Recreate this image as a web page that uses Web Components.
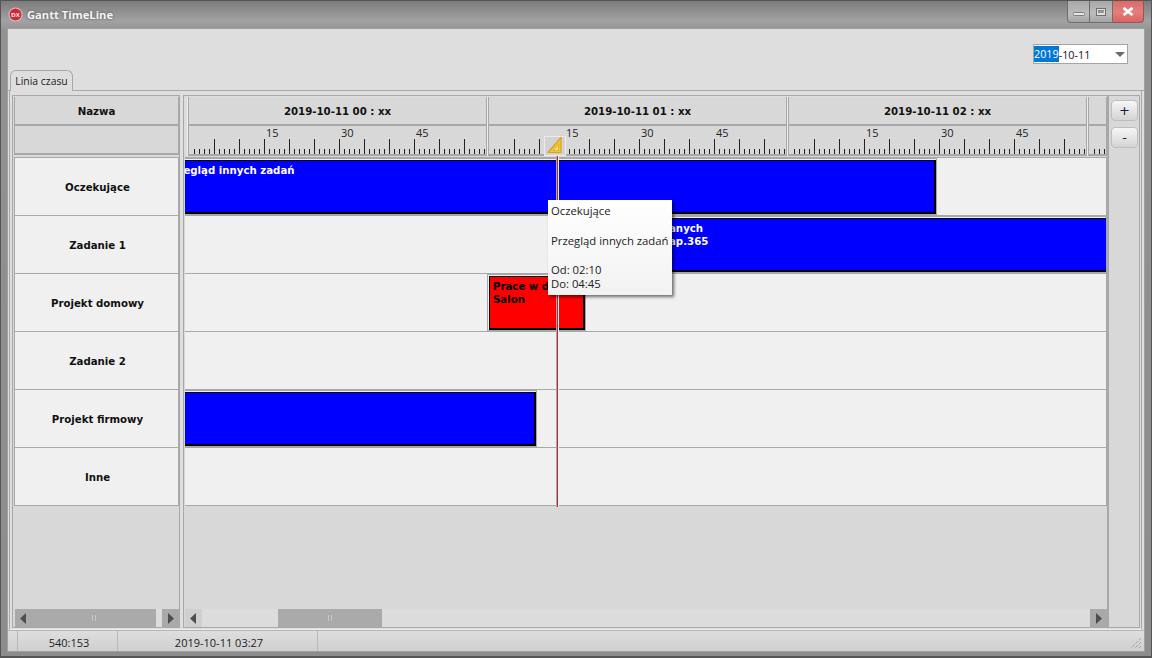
<!DOCTYPE html>
<html>
<head>
<meta charset="utf-8">
<title>Gantt TimeLine</title>
<style>
  html, body { margin: 0; padding: 0; width: 1152px; height: 658px; overflow: hidden; background: #6a6a6a; }
  body { font-family: "Noto Sans", "DejaVu Sans", sans-serif; }
</style>
</head>
<body>
<gantt-window></gantt-window>

<script>
const BOLD = 'bold 10.2px "DejaVu Sans", sans-serif';

class TitleBar extends HTMLElement {
  constructor() {
    super();
    this.shadow = this.attachShadow({ mode: "open" });
  }
  connectedCallback() {
    this.shadow.innerHTML = `
      <style>
        :host { display: flex; align-items: center; height: 27px; box-sizing: border-box; padding-left: 7px; flex: none; }
        .logo { width: 15px; height: 15px; margin-right: 4px; }
        .cap { font: bold 11.2px "Open Sans", "DejaVu Sans", sans-serif; color: #f4f4f4; text-shadow: 0 0 3px #555; }
        .btns { margin-left: auto; margin-right: 7px; align-self: flex-start; display: flex; height: 22px; }
        .b { width: 23px; display: flex; align-items: center; justify-content: center; box-sizing: border-box;
          border: 1px solid #6e6e6e; border-top: 0; border-left-width: 0;
          background: linear-gradient(#a8a8a8, #bcbcbc 60%, #a4a4a4); }
        .b:first-child { border-left-width: 1px; border-radius: 0 0 0 4px; }
        .x { width: 31px; background: linear-gradient(#d96a6a, #e57e7e 50%, #dc6464); border-radius: 0 0 4px 0; border-color: #8e5a5a; }
      </style>
      <svg class="logo" viewBox="0 0 15 15"><circle cx="7.5" cy="7.5" r="7" fill="#c9c9c9"/><circle cx="7.5" cy="7.5" r="6" fill="#dc2235"/><text x="7.5" y="9.6" font-size="6" font-weight="700" fill="#fff" text-anchor="middle" font-family="Liberation Sans">DX</text></svg>
      <span class="cap">${this.getAttribute("text")}</span>
      <div class="btns">
        <div class="b"><svg width="12" height="4" style="margin-top:4px"><rect x=".5" y=".5" width="11" height="3" rx="1" fill="#e6e6e6" stroke="#7c7c7c"/></svg></div>
        <div class="b"><svg width="10" height="8"><rect x=".5" y=".5" width="9" height="7" fill="#dedede" stroke="#6e6e6e"/><rect x="2.5" y="2.5" width="5" height="2" fill="#9a9a9a" stroke="#6e6e6e" stroke-width=".6"/></svg></div>
        <div class="b x"><svg width="12" height="9"><path d="M1.5 1 L10.5 8 M10.5 1 L1.5 8" stroke="#fff" stroke-width="2.8"/></svg></div>
      </div>`;
  }
}

class DatePicker extends HTMLElement {
  constructor() {
    super();
    this.shadow = this.attachShadow({ mode: "open" });
  }
  connectedCallback() {
    const v = this.getAttribute("value");
    this.shadow.innerHTML = `
      <style>
        :host { display: flex; align-items: center; width: 95px; height: 20px; box-sizing: border-box; background: #fff;
          border: 1px solid #a4a4a4; font: 10.8px "Open Sans", "DejaVu Sans", sans-serif; color: #111; }
        .sel { background: #0078d7; color: #fff; line-height: 16px; }
        .arrow { margin-left: auto; margin-right: 2px; width: 0; height: 0; border: 5px solid transparent; border-top: 5px solid #6a6a6a; border-bottom: 0; }
      </style>
      <span class="sel">${v.slice(0, 4)}</span><span>${v.slice(4)}</span><span class="arrow"></span>`;
  }
}

class TimeRuler extends HTMLElement {
  constructor() {
    super();
    this.shadow = this.attachShadow({ mode: "open" });
  }
  connectedCallback() {
    const w = +this.getAttribute("width");
    const labels = this.hasAttribute("nolabels") ? [] : [15, 30, 45];
    let ticks = "";
    for (let x = 7; x < w - 1; x += 5) {
      const major = (x - 2) % 25 === 0;
      ticks += `<rect x="${x}" y="${major ? 13 : 23}" width="1" height="${major ? 15 : 5}" fill="#222"/>`;
    }
    const texts = labels.map(m => `<text x="${2 + m * 5 + 2}" y="11" font-size="11" fill="#222" font-family="Open Sans">${m}</text>`).join("");
    this.shadow.innerHTML = `
      <style>
        :host { display: block; width: ${w}px; height: 30px; }
        svg { display: block; background: #d8d8d8; }
      </style>
      <svg width="${w}" height="30"><rect width="1" height="30" fill="#ececec"/><rect x="1" width="1" height="30" fill="#a8a8a8"/><rect x="${w - 1}" width="1" height="30" fill="#a8a8a8"/><rect x="1" y="28" width="${w - 1}" height="2" fill="#a8a8a8"/>${ticks}${texts}</svg>`;
  }
}

class HourHead extends HTMLElement {
  constructor() {
    super();
    this.shadow = this.attachShadow({ mode: "open" });
  }
  connectedCallback() {
    const w = this.getAttribute("width");
    this.shadow.innerHTML = `
      <style>
        :host { display: flex; flex-direction: column; width: ${w}px; flex: none; }
        .t { height: 29px; box-sizing: border-box; background: #d8d8d8; border: solid #a8a8a8; border-width: 0 1px 2px 1px; padding-top: 2px;
          margin-left: 1px; box-shadow: -1px 0 0 #ececec;
          display: flex; align-items: center; justify-content: center; font: ${BOLD}; color: #111; }
      </style>
      <div class="t">${this.getAttribute("text") || ""}</div>
      <time-ruler width="${w}" ${this.hasAttribute("nolabels") ? "nolabels" : ""}></time-ruler>`;
  }
}

class NameCell extends HTMLElement {
  constructor() {
    super();
    this.shadow = this.attachShadow({ mode: "open" });
  }
  connectedCallback() {
    this.shadow.innerHTML = `
      <style>
        :host { display: flex; align-items: center; justify-content: center; box-sizing: border-box; height: 58px;
          background: #f0f0f0; border: 1px solid #a8a8a8; border-width: 0 1px 1px 1px; padding: 1px 0 0 2px;
          font: ${BOLD}; color: #111; }
      </style>
      <slot></slot>`;
  }
}

class TimelineRow extends HTMLElement {
  constructor() {
    super();
    this.shadow = this.attachShadow({ mode: "open" });
  }
  connectedCallback() {
    this.shadow.innerHTML = `
      <style>
        :host { display: block; position: relative; height: 58px; box-sizing: border-box; background: #f0f0f0; border-bottom: 1px solid #a8a8a8; }
      </style>
      <slot></slot>`;
  }
}

class TaskBar extends HTMLElement {
  constructor() {
    super();
    this.shadow = this.attachShadow({ mode: "open" });
  }
  connectedCallback() {
    const l = this.getAttribute("left"), w = this.getAttribute("width"), c = this.getAttribute("color");
    this.shadow.innerHTML = `
      <style>
        :host { position: absolute; left: ${l}px; width: ${w}px; top: 0; height: 57px; box-sizing: border-box; padding: 1px 0 1px 1px;
          border: 1px solid #a8a8a8; }
        .bar { box-sizing: border-box; height: 54px; overflow: hidden; background: ${c}; border: solid #000; border-width: 1px 2px 2px 1px;
          color: ${c === "#ff0000" ? "#000" : "#fff"}; font: bold 10.2px/13px "DejaVu Sans", sans-serif; padding: 3px 0 0 3px; white-space: pre; }
      </style>
      <div class="bar"><slot></slot></div>`;
  }
}

class ScrollBar extends HTMLElement {
  constructor() {
    super();
    this.shadow = this.attachShadow({ mode: "open" });
  }
  connectedCallback() {
    const tl = this.getAttribute("thumb-left"), tw = this.getAttribute("thumb-width");
    const lb = this.hasAttribute("light") ? "#cfcfcf" : "#a9a9a9";
    this.shadow.innerHTML = `
      <style>
        :host { display: flex; height: 18px; flex: none; }
        .a { width: 17px; display: flex; align-items: center; justify-content: center; background: #a9a9a9; flex: none; }
        .a.first { background: ${lb}; }
        .track { flex: 1; position: relative; background: #dcdcdc; }
        .thumb { position: absolute; top: 0; bottom: 0; left: ${tl}px; width: ${tw}px; background: #aaaaaa; display: flex; align-items: center; justify-content: center; }
        .grip { width: 2px; height: 6px; border: 1px solid #c8c8c8; border-width: 0 1px; }
      </style>
      <div class="a first"><svg width="7" height="11"><path d="M6 0 V11 L0 5.5 Z" fill="#4e4e4e"/></svg></div>
      <div class="track"><div class="thumb"><div class="grip"></div></div></div>
      <div class="a"><svg width="7" height="11"><path d="M1 0 V11 L7 5.5 Z" fill="#4e4e4e"/></svg></div>`;
  }
}

class GanttTooltip extends HTMLElement {
  constructor() {
    super();
    this.shadow = this.attachShadow({ mode: "open" });
  }
  connectedCallback() {
    this.shadow.innerHTML = `
      <style>
        :host { position: absolute; left: 364px; top: 104px; width: 124px; height: 95px; box-sizing: border-box; padding: 3px;
          background: linear-gradient(#ffffff, #f2f2f2); box-shadow: 2px 2px 3px rgba(0,0,0,.55); z-index: 5; }
        .txt { font: 11.3px/15px "Open Sans", "DejaVu Sans", sans-serif; color: #222; white-space: pre; }
        .txt.tight { line-height: 14px; }
      </style>
      <div class="txt"><slot></slot></div>
      <div class="txt tight"><slot name="time"></slot></div>`;
  }
}

class ZoomButton extends HTMLElement {
  constructor() {
    super();
    this.shadow = this.attachShadow({ mode: "open" });
  }
  connectedCallback() {
    this.shadow.innerHTML = `
      <style>
        :host { display: flex; align-items: center; justify-content: center; width: 27px; height: 21px; box-sizing: border-box;
          border: 1px solid #bdbdbd; border-radius: 4px; background: linear-gradient(#f6f6f6, #d4d4d4);
          font: 13px "DejaVu Sans", sans-serif; color: #1a1a4a; }
      </style>
      <slot></slot>`;
  }
}

class GanttWindow extends HTMLElement {
  constructor() {
    super();
    this.shadow = this.attachShadow({ mode: "open" });
  }
  connectedCallback() {
    const names = ["Oczekujące", "Zadanie 1", "Projekt domowy", "Zadanie 2", "Projekt firmowy", "Inne"];
    this.shadow.innerHTML = `
      <style>
        :host { display: flex; flex-direction: column; width: 1152px; height: 658px; box-sizing: border-box;
          background: linear-gradient(#7c7c7c, #a2a2a2 20px, #929292 30px, #8c8c8c); border: 1px solid #555; border-bottom-width: 2px; }
        .client { flex: 1; min-height: 0; margin: 0 6px 4px 6px; display: flex; flex-direction: column; background: #dedede; border: 1px solid #a0a0a0; }
        .top { height: 41px; flex: none; display: flex; justify-content: flex-end; align-items: flex-start; padding: 15px 16px 0 0; box-sizing: border-box; }
        .tabs { height: 21px; flex: none; display: flex; padding-left: 2px; border-bottom: 1px solid #a8a8a8; box-sizing: border-box; }
        .tab { width: 63px; height: 21px; box-sizing: border-box; border: 1px solid #a8a8a8; border-bottom: 0; border-radius: 6px 6px 0 0; background: #dedede;
          font: 10.4px "Open Sans", sans-serif; color: #222; display: flex; align-items: center; justify-content: center; }
        .page { flex: 1; min-height: 0; display: flex; margin: 0 2px 0 1px; padding: 4px 1px 1px 2px; border: 1px solid #a8a8a8; border-width: 0 1px 1px; border-bottom-color: #ececec; }
        .left { width: 168px; flex: none; box-sizing: border-box; border: 1px solid #a8a8a8; background: #d8d8d8; display: flex; flex-direction: column; padding: 1px 0 0 1px; }
        .hd { height: 29px; box-sizing: border-box; background: #d8d8d8; border: 1px solid #a8a8a8; border-width: 0 1px 2px 1px; padding-top: 1px; display: flex; align-items: center; justify-content: center;
          font: ${BOLD}; color: #111; flex: none; }
        .cols { border-top: 1px solid #a8a8a8; margin-top: 2px; flex: none; }
        .left scroll-bar { margin-left: 1px; }
        .right { width: 925px; margin-left: 3px; flex: none; box-sizing: border-box; border: 1px solid #a8a8a8; background: #d8d8d8; display: flex; flex-direction: column; position: relative; overflow: hidden; }
        .heads { display: flex; height: 60px; flex: none; padding: 1px 0 0 3px; box-sizing: border-box; overflow: hidden; background: #dcdcdc; }
        .rows { flex: none; position: relative; overflow: hidden; margin: 1px 0 0 1px; border-top: 1px solid #a8a8a8; border-right: 1px solid #a8a8a8; }
        .right scroll-bar { margin-left: 1px; }
        .fill { flex: 1; }
        .side { width: 32px; flex: none; box-sizing: border-box; border: 1px solid #a8a8a8; display: flex; flex-direction: column; align-items: flex-start; gap: 6px; padding: 4px 0 0 2px; background: #d8d8d8; }
        .status { height: 21px; flex: none; border-top: 1px solid #b4b4b4; box-sizing: border-box; display: flex; background: linear-gradient(#dedede, #cfcfcf); font: 11px "Open Sans", sans-serif; color: #222; position: relative; }
        .status span { display: block; text-align: center; height: 100%; line-height: 23px; padding-left: 3px; border-left: 1px solid #b8b8b8; box-sizing: border-box; }
        .grip { position: absolute; right: 2px; bottom: 2px; }
        .marker-line { position: absolute; left: 373px; top: 60px; width: 1px; height: 351px; background: #b03030; box-shadow: 1px 0 0 #ececec, -1px 0 0 #a8a8a8; z-index: 3; }
        .marker { position: absolute; left: 360px; top: 40px; width: 22px; height: 20px; z-index: 4; }
      </style>
      <title-bar text="Gantt TimeLine"></title-bar>
      <div class="client">
        <div class="top"><date-picker value="2019-10-11"></date-picker></div>
        <div class="tabs"><div class="tab">Linia czasu</div></div>
        <div class="page">
          <div class="left">
            <div class="hd">Nazwa</div>
            <div class="hd"></div>
            <div class="cols">${names.map(n => `<name-cell>${n}</name-cell>`).join("")}</div>
            <div class="fill"></div>
            <scroll-bar thumb-left="0" thumb-width="124"></scroll-bar>
          </div>
          <div class="right">
            <div class="heads">
              <hour-head width="300" text="2019-10-11 00 : xx"></hour-head>
              <hour-head width="300" text="2019-10-11 01 : xx"></hour-head>
              <hour-head width="300" text="2019-10-11 02 : xx"></hour-head>
              <hour-head width="20" nolabels></hour-head>
            </div>
            <div class="rows">
              <timeline-row>
                <task-bar left="-26" width="778" color="#0000ff">Przegląd innych zadań</task-bar>
              </timeline-row>
              <timeline-row>
                <task-bar left="478" width="503" color="#0000ff">anych
ap.365</task-bar>
              </timeline-row>
              <timeline-row>
                <task-bar left="302" width="99" color="#ff0000">Prace w domu
Salon</task-bar>
              </timeline-row>
              <timeline-row></timeline-row>
              <timeline-row>
                <task-bar left="-3" width="355" color="#0000ff"></task-bar>
              </timeline-row>
              <timeline-row></timeline-row>
            </div>
            <div class="fill"></div>
            <scroll-bar light thumb-left="76" thumb-width="104"></scroll-bar>
            <div class="marker-line"></div>
            <svg class="marker" viewBox="0 0 22 20"><rect x=".5" y=".5" width="21" height="19" fill="#d2d2d2" stroke="#ececec"/><path d="M4 16.5 L17 1.5 V16.5 Z" fill="#f3c42e" stroke="#d8a420" stroke-width="1.2" stroke-linejoin="round"/><path d="M9.5 14.5 L14.5 8.5 V14.5 Z" fill="#fbe690" stroke="#d8a420" stroke-width=".7"/></svg>
            <gantt-tooltip>Oczekujące

Przegląd innych zadań

<span slot="time">Od: 02:10
Do: 04:45</span></gantt-tooltip>
          </div>
          <div class="side">
            <zoom-button>+</zoom-button>
            <zoom-button>-</zoom-button>
          </div>
        </div>
        <div class="status">
          <span style="margin-left:9px;width:100px">540:153</span>
          <span style="width:200px">2019-10-11 03:27</span>
          <span style="width:1px;padding:0"></span>
          <svg class="grip" width="12" height="12"><path d="M11 1 L1 11 M11 5 L5 11 M11 9 L9 11" stroke="#8a8a8a" stroke-dasharray="1 1"/></svg>
        </div>
      </div>`;
  }
}

customElements.define("time-ruler", TimeRuler);
customElements.define("hour-head", HourHead);
customElements.define("title-bar", TitleBar);
customElements.define("date-picker", DatePicker);
customElements.define("name-cell", NameCell);
customElements.define("timeline-row", TimelineRow);
customElements.define("task-bar", TaskBar);
customElements.define("scroll-bar", ScrollBar);
customElements.define("gantt-tooltip", GanttTooltip);
customElements.define("zoom-button", ZoomButton);
customElements.define("gantt-window", GanttWindow);
</script>
</body>
</html>
